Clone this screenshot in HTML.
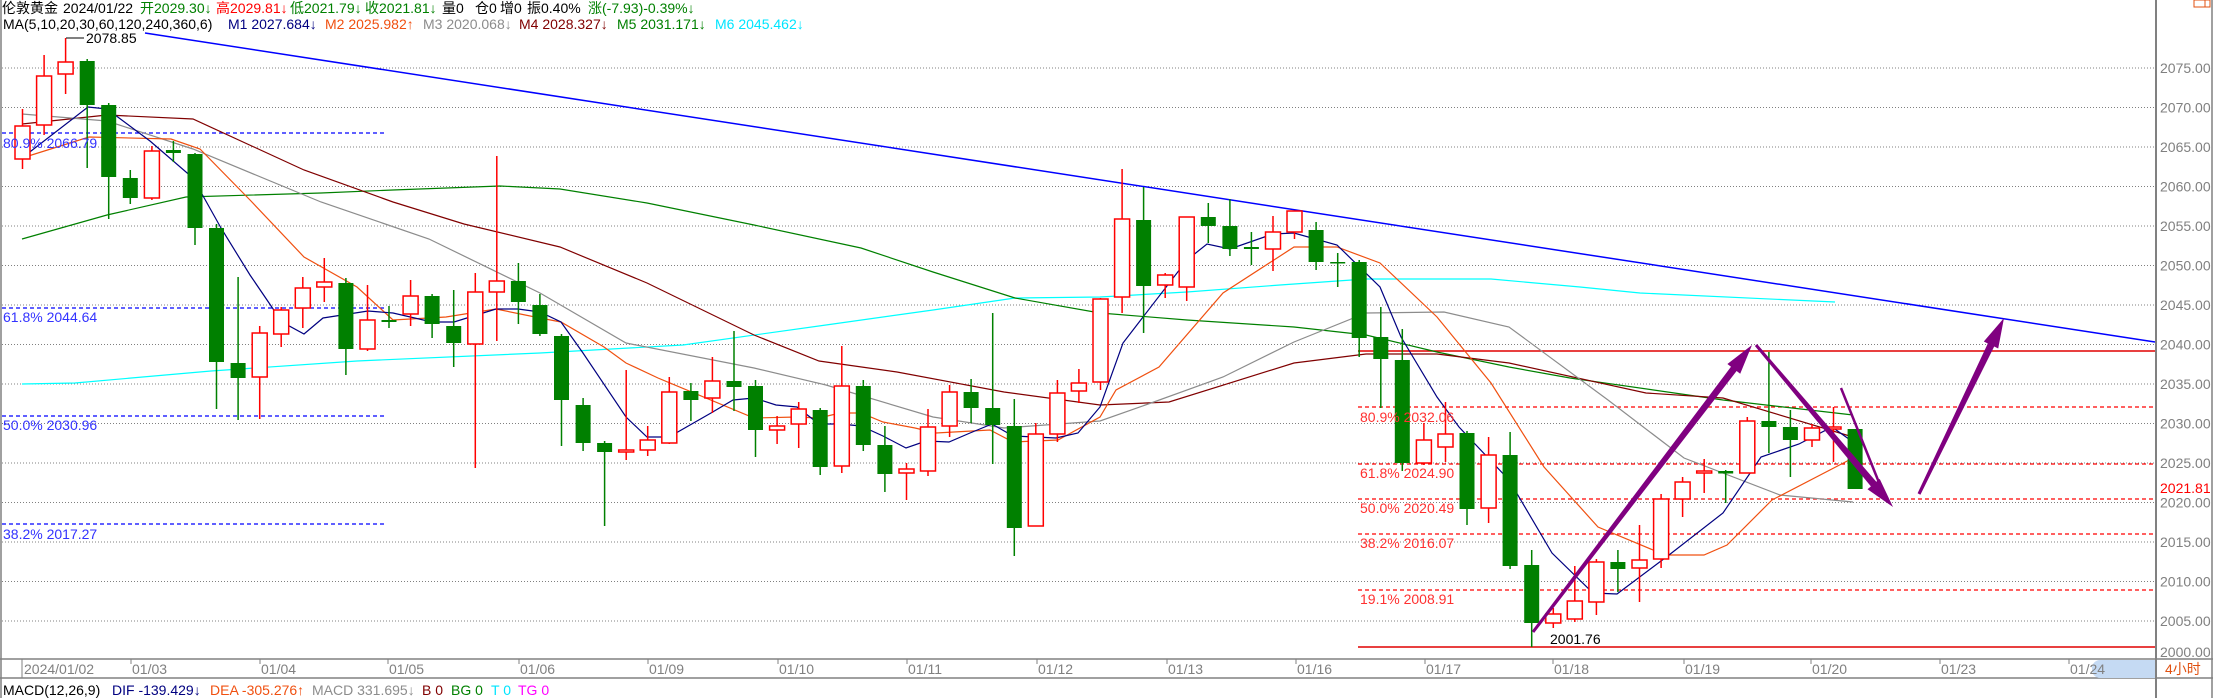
<!DOCTYPE html>
<html><head><meta charset="utf-8"><style>
html,body{margin:0;padding:0;background:#fff;width:2213px;height:698px;overflow:hidden}
svg{display:block;font-family:"Liberation Sans","Noto Sans CJK SC",sans-serif;font-size:14px}
.g line{stroke:#008000;stroke-width:1.5}
.g rect{fill:#008000}
.r line{stroke:#ff0000;stroke-width:1.5}
.r rect{fill:#fff;stroke:#ff0000;stroke-width:1.5}
.grid line{stroke:#808080;stroke-width:1;stroke-dasharray:1 2}
.ax text{fill:#808080}
.ma{fill:none;stroke-width:1.2}
</style></head><body>
<svg width="2213" height="698" viewBox="0 0 2213 698" xmlns="http://www.w3.org/2000/svg">
<line x1="1" y1="0" x2="1" y2="698" stroke="#808080" stroke-width="1.5"/>
<line x1="2156" y1="0" x2="2156" y2="698" stroke="#808080" stroke-width="2"/>
<line x1="2212" y1="0" x2="2212" y2="698" stroke="#808080" stroke-width="1.5"/>
<rect x="2194" y="0" width="16" height="7" fill="none" stroke="#e05010" stroke-width="1"/>
<line x1="2205" y1="0" x2="2205" y2="7" stroke="#e05010"/>
<g class="grid">
<line x1="2" y1="68" x2="2155" y2="68"/><line x1="2" y1="107.5" x2="2155" y2="107.5"/><line x1="2" y1="147" x2="2155" y2="147"/><line x1="2" y1="186.5" x2="2155" y2="186.5"/><line x1="2" y1="226" x2="2155" y2="226"/><line x1="2" y1="265.5" x2="2155" y2="265.5"/><line x1="2" y1="305" x2="2155" y2="305"/><line x1="2" y1="344.5" x2="2155" y2="344.5"/><line x1="2" y1="384" x2="2155" y2="384"/><line x1="2" y1="423.5" x2="2155" y2="423.5"/><line x1="2" y1="463" x2="2155" y2="463"/><line x1="2" y1="502.5" x2="2155" y2="502.5"/><line x1="2" y1="542" x2="2155" y2="542"/><line x1="2" y1="581.5" x2="2155" y2="581.5"/><line x1="2" y1="621" x2="2155" y2="621"/>
</g>
<g class="ax">
<text x="2160" y="73">2075.00</text><text x="2160" y="112.5">2070.00</text><text x="2160" y="152">2065.00</text><text x="2160" y="191.5">2060.00</text><text x="2160" y="231">2055.00</text><text x="2160" y="270.5">2050.00</text><text x="2160" y="310">2045.00</text><text x="2160" y="349.5">2040.00</text><text x="2160" y="389">2035.00</text><text x="2160" y="428.5">2030.00</text><text x="2160" y="468">2025.00</text><text x="2160" y="507.5">2020.00</text><text x="2160" y="547">2015.00</text><text x="2160" y="586.5">2010.00</text><text x="2160" y="626">2005.00</text><text x="2160" y="657">2000.00</text>
</g>
<text x="2160" y="493" fill="#ff0000">2021.81</text>
<g stroke="#0000ff" stroke-width="1.2" stroke-dasharray="4 3">
<line x1="2" y1="133" x2="386" y2="133"/><line x1="2" y1="308" x2="386" y2="308"/><line x1="2" y1="416" x2="386" y2="416"/><line x1="2" y1="524" x2="386" y2="524"/>
</g>
<g stroke="#ff0000" stroke-width="1.2" stroke-dasharray="4 3">
<line x1="1358" y1="407" x2="2155" y2="407"/><line x1="1358" y1="464" x2="2155" y2="464"/><line x1="1358" y1="499" x2="2155" y2="499"/><line x1="1358" y1="534" x2="2155" y2="534"/><line x1="1358" y1="590" x2="2155" y2="590"/>
</g>
<line x1="1358" y1="351" x2="2155" y2="351" stroke="#e00000" stroke-width="1.5"/>
<line x1="1358" y1="647" x2="2155" y2="647" stroke="#e00000" stroke-width="1.5"/>
<line x1="145" y1="33" x2="2155" y2="342" stroke="#0000ff" stroke-width="1.5"/>
<polyline class="ma" stroke="#00ffff" points="22,384 75,383 211,371 357,361 540,353 683,345 826,325 933,310 1015,298 1100,297 1187,292 1280,285 1366,279 1491,279 1580,287 1640,293 1835,302"/>
<polyline class="ma" stroke="#008000" points="22,239 107,215 186,197 321,193 393,190 500,186 560,189 647,203 754,225 861,248 933,272 1015,298 1100,313 1187,320 1294,327 1366,335 1437,352 1509,367 1570,378 1723,400 1853,415"/>
<polyline class="ma" stroke="#800000" stroke-width="1.5" points="22,124 107,115 193,119 304,170 393,202 464,224 560,247 647,283 754,335 819,361 897,372 1004,392 1100,405 1169,402 1294,363 1366,354 1437,354 1509,363 1646,393 1723,398 1853,437"/>
<polyline class="ma" stroke="#8c8c8c" points="22,114 107,121 193,149 321,202 429,239 540,293 626,343 754,368 826,385 933,417 1004,428 1100,421 1151,403 1223,377 1294,342 1366,313 1444,312 1509,327 1608,400 1684,458 1780,495 1853,502"/>
<polyline class="ma" stroke="#f05010" points="22,158 89,137 171,139 200,149 250,200 304,257 357,287 393,320 446,317 496,309 540,318 561,322 604,347 626,363 658,378 754,418 797,417 819,418 840,413 861,413 883,422 915,428 936,433 990,430 1013,442 1058,440 1100,417 1116,390 1159,367 1223,293 1294,247 1337,247 1380,263 1437,317 1491,383 1544,467 1598,527 1665,555 1704,555 1727,545 1772,500 1853,458"/>
<polyline class="ma" stroke="#000080" points="22,158 88,107 107,109 150,141 193,178 221,228 250,275 282,322 304,334 323,318 368,311 393,313 432,322 454,322 496,309 518,309 540,312 561,322 583,353 626,417 647,437 669,437 711,413 733,400 754,398 776,405 797,407 819,424 840,424 861,426 883,436 906,448 926,441 949,442 970,433 992,424 1013,436 1056,438 1078,433 1100,407 1123,343 1187,260 1207,244 1230,249 1273,234 1294,233 1337,245 1380,287 1401,337 1437,397 1459,427 1509,480 1552,553 1593,593 1617,594 1669,555 1723,513 1761,457 1799,444 1832,427 1853,442"/>
<g class="r"><line x1="22.5" y1="109" x2="22.5" y2="169"/><rect x="15" y="126" width="15" height="33"/></g>
<g class="r"><line x1="44.1" y1="55" x2="44.1" y2="135"/><rect x="36.6" y="76" width="15" height="49"/></g>
<g class="r"><line x1="65.6" y1="38" x2="65.6" y2="94"/><rect x="58.1" y="62" width="15" height="12"/></g>
<g class="g"><line x1="87.2" y1="59" x2="87.2" y2="168"/><rect x="79.7" y="61" width="15" height="44"/></g>
<g class="g"><line x1="108.7" y1="103" x2="108.7" y2="219"/><rect x="101.2" y="105" width="15" height="72"/></g>
<g class="g"><line x1="130.3" y1="170" x2="130.3" y2="204"/><rect x="122.8" y="178" width="15" height="20"/></g>
<g class="r"><line x1="151.9" y1="146" x2="151.9" y2="200"/><rect x="144.4" y="151" width="15" height="47"/></g>
<g class="g"><line x1="173.4" y1="141" x2="173.4" y2="162"/><rect x="165.9" y="150" width="15" height="3"/></g>
<g class="g"><line x1="195" y1="153" x2="195" y2="245"/><rect x="187.5" y="154" width="15" height="74"/></g>
<g class="g"><line x1="216.5" y1="224" x2="216.5" y2="409"/><rect x="209" y="228" width="15" height="134"/></g>
<g class="g"><line x1="238.1" y1="277" x2="238.1" y2="420"/><rect x="230.6" y="363" width="15" height="15"/></g>
<g class="r"><line x1="259.7" y1="326" x2="259.7" y2="419"/><rect x="252.2" y="333" width="15" height="44"/></g>
<g class="r"><line x1="281.2" y1="307" x2="281.2" y2="347"/><rect x="273.7" y="310" width="15" height="24"/></g>
<g class="r"><line x1="302.8" y1="277" x2="302.8" y2="328"/><rect x="295.3" y="288" width="15" height="20"/></g>
<g class="r"><line x1="324.3" y1="258" x2="324.3" y2="302"/><rect x="316.8" y="282" width="15" height="5"/></g>
<g class="g"><line x1="345.9" y1="278" x2="345.9" y2="375"/><rect x="338.4" y="283" width="15" height="66"/></g>
<g class="r"><line x1="367.5" y1="285" x2="367.5" y2="351"/><rect x="360" y="320" width="15" height="29"/></g>
<g class="g"><line x1="389" y1="306" x2="389" y2="328"/><rect x="381.5" y="320" width="15" height="2"/></g>
<g class="r"><line x1="410.6" y1="280" x2="410.6" y2="326"/><rect x="403.1" y="296" width="15" height="18"/></g>
<g class="g"><line x1="432.1" y1="294" x2="432.1" y2="338"/><rect x="424.6" y="296" width="15" height="28"/></g>
<g class="g"><line x1="453.7" y1="290" x2="453.7" y2="367"/><rect x="446.2" y="326" width="15" height="17"/></g>
<g class="r"><line x1="475.3" y1="273" x2="475.3" y2="468"/><rect x="467.8" y="292" width="15" height="52"/></g>
<g class="r"><line x1="496.8" y1="156" x2="496.8" y2="341"/><rect x="489.3" y="281" width="15" height="11"/></g>
<g class="g"><line x1="518.4" y1="263" x2="518.4" y2="324"/><rect x="510.9" y="281" width="15" height="21"/></g>
<g class="g"><line x1="539.9" y1="294" x2="539.9" y2="336"/><rect x="532.4" y="305" width="15" height="29"/></g>
<g class="g"><line x1="561.5" y1="334" x2="561.5" y2="446"/><rect x="554" y="336" width="15" height="64"/></g>
<g class="g"><line x1="583.1" y1="398" x2="583.1" y2="451"/><rect x="575.6" y="405" width="15" height="38"/></g>
<g class="g"><line x1="604.6" y1="441" x2="604.6" y2="526"/><rect x="597.1" y="443" width="15" height="9"/></g>
<g class="r"><line x1="626.2" y1="370" x2="626.2" y2="460"/><rect x="618.7" y="450" width="15" height="2" fill="#f00"/></g>
<g class="r"><line x1="647.7" y1="426" x2="647.7" y2="456"/><rect x="640.2" y="440" width="15" height="10"/></g>
<g class="r"><line x1="669.3" y1="377" x2="669.3" y2="444"/><rect x="661.8" y="392" width="15" height="51"/></g>
<g class="g"><line x1="690.9" y1="383" x2="690.9" y2="421"/><rect x="683.4" y="391" width="15" height="9"/></g>
<g class="r"><line x1="712.4" y1="357" x2="712.4" y2="413"/><rect x="704.9" y="381" width="15" height="17"/></g>
<g class="g"><line x1="734" y1="331" x2="734" y2="411"/><rect x="726.5" y="381" width="15" height="6"/></g>
<g class="g"><line x1="755.5" y1="380" x2="755.5" y2="457"/><rect x="748" y="386" width="15" height="44"/></g>
<g class="r"><line x1="777.1" y1="416" x2="777.1" y2="444"/><rect x="769.6" y="426" width="15" height="4"/></g>
<g class="r"><line x1="798.7" y1="402" x2="798.7" y2="448"/><rect x="791.2" y="409" width="15" height="15"/></g>
<g class="g"><line x1="820.2" y1="408" x2="820.2" y2="475"/><rect x="812.7" y="410" width="15" height="57"/></g>
<g class="r"><line x1="841.8" y1="346" x2="841.8" y2="473"/><rect x="834.3" y="386" width="15" height="80"/></g>
<g class="g"><line x1="863.3" y1="380" x2="863.3" y2="451"/><rect x="855.8" y="386" width="15" height="59"/></g>
<g class="g"><line x1="884.9" y1="426" x2="884.9" y2="492"/><rect x="877.4" y="445" width="15" height="29"/></g>
<g class="r"><line x1="906.5" y1="463" x2="906.5" y2="500"/><rect x="899" y="469" width="15" height="4"/></g>
<g class="r"><line x1="928" y1="409" x2="928" y2="476"/><rect x="920.5" y="427" width="15" height="44"/></g>
<g class="r"><line x1="949.6" y1="385" x2="949.6" y2="437"/><rect x="942.1" y="392" width="15" height="34"/></g>
<g class="g"><line x1="971.1" y1="379" x2="971.1" y2="423"/><rect x="963.6" y="392" width="15" height="16"/></g>
<g class="g"><line x1="992.7" y1="313" x2="992.7" y2="464"/><rect x="985.2" y="408" width="15" height="17"/></g>
<g class="g"><line x1="1014.3" y1="399" x2="1014.3" y2="556"/><rect x="1006.8" y="426" width="15" height="102"/></g>
<g class="r"><line x1="1035.8" y1="423" x2="1035.8" y2="526"/><rect x="1028.3" y="434" width="15" height="92"/></g>
<g class="r"><line x1="1057.4" y1="380" x2="1057.4" y2="442"/><rect x="1049.9" y="393" width="15" height="41"/></g>
<g class="r"><line x1="1078.9" y1="369" x2="1078.9" y2="403"/><rect x="1071.4" y="383" width="15" height="8"/></g>
<g class="r"><line x1="1100.5" y1="298" x2="1100.5" y2="390"/><rect x="1093" y="299" width="15" height="83"/></g>
<g class="r"><line x1="1122.1" y1="169" x2="1122.1" y2="313"/><rect x="1114.6" y="219" width="15" height="78"/></g>
<g class="g"><line x1="1143.6" y1="187" x2="1143.6" y2="333"/><rect x="1136.1" y="220" width="15" height="66"/></g>
<g class="r"><line x1="1165.2" y1="273" x2="1165.2" y2="298"/><rect x="1157.7" y="275" width="15" height="10"/></g>
<g class="r"><line x1="1186.7" y1="217" x2="1186.7" y2="301"/><rect x="1179.2" y="217" width="15" height="70"/></g>
<g class="g"><line x1="1208.3" y1="203" x2="1208.3" y2="243"/><rect x="1200.8" y="217" width="15" height="9"/></g>
<g class="g"><line x1="1229.9" y1="199" x2="1229.9" y2="256"/><rect x="1222.4" y="226" width="15" height="23"/></g>
<g class="g"><line x1="1251.4" y1="232" x2="1251.4" y2="265"/><rect x="1243.9" y="247" width="15" height="2"/></g>
<g class="r"><line x1="1273" y1="216" x2="1273" y2="271"/><rect x="1265.5" y="232" width="15" height="17"/></g>
<g class="r"><line x1="1294.5" y1="211" x2="1294.5" y2="239"/><rect x="1287" y="211" width="15" height="21"/></g>
<g class="g"><line x1="1316.1" y1="222" x2="1316.1" y2="270"/><rect x="1308.6" y="230" width="15" height="32"/></g>
<g class="g"><line x1="1337.7" y1="253" x2="1337.7" y2="287"/><rect x="1330.2" y="262" width="15" height="1.5"/></g>
<g class="g"><line x1="1359.2" y1="260" x2="1359.2" y2="357"/><rect x="1351.7" y="262" width="15" height="76"/></g>
<g class="g"><line x1="1380.8" y1="307" x2="1380.8" y2="408"/><rect x="1373.3" y="337" width="15" height="22"/></g>
<g class="g"><line x1="1402.3" y1="329" x2="1402.3" y2="471"/><rect x="1394.8" y="360" width="15" height="103"/></g>
<g class="r"><line x1="1423.9" y1="423" x2="1423.9" y2="465"/><rect x="1416.4" y="440" width="15" height="23"/></g>
<g class="r"><line x1="1445.5" y1="402" x2="1445.5" y2="462"/><rect x="1438" y="434" width="15" height="13"/></g>
<g class="g"><line x1="1467" y1="431" x2="1467" y2="525"/><rect x="1459.5" y="433" width="15" height="76"/></g>
<g class="r"><line x1="1488.6" y1="437" x2="1488.6" y2="523"/><rect x="1481.1" y="455" width="15" height="53"/></g>
<g class="g"><line x1="1510.1" y1="432" x2="1510.1" y2="569"/><rect x="1502.6" y="455" width="15" height="111"/></g>
<g class="g"><line x1="1531.7" y1="550" x2="1531.7" y2="647"/><rect x="1524.2" y="565" width="15" height="58"/></g>
<g class="r"><line x1="1553.3" y1="608" x2="1553.3" y2="628"/><rect x="1545.8" y="614" width="15" height="9"/></g>
<g class="r"><line x1="1574.8" y1="566" x2="1574.8" y2="622"/><rect x="1567.3" y="601" width="15" height="18"/></g>
<g class="r"><line x1="1596.4" y1="559" x2="1596.4" y2="615"/><rect x="1588.9" y="562" width="15" height="40"/></g>
<g class="g"><line x1="1617.9" y1="550" x2="1617.9" y2="592"/><rect x="1610.4" y="562" width="15" height="7"/></g>
<g class="r"><line x1="1639.5" y1="525" x2="1639.5" y2="602"/><rect x="1632" y="560" width="15" height="8"/></g>
<g class="r"><line x1="1661.1" y1="494" x2="1661.1" y2="568"/><rect x="1653.6" y="499" width="15" height="60"/></g>
<g class="r"><line x1="1682.6" y1="477" x2="1682.6" y2="517"/><rect x="1675.1" y="482" width="15" height="17"/></g>
<g class="r"><line x1="1704.2" y1="459" x2="1704.2" y2="493"/><rect x="1696.7" y="471" width="15" height="2" fill="#f00"/></g>
<g class="g"><line x1="1725.7" y1="470" x2="1725.7" y2="503"/><rect x="1718.2" y="471" width="15" height="2.5"/></g>
<g class="r"><line x1="1747.3" y1="417" x2="1747.3" y2="473"/><rect x="1739.8" y="421" width="15" height="52"/></g>
<g class="g"><line x1="1768.9" y1="352" x2="1768.9" y2="453"/><rect x="1761.4" y="421" width="15" height="6"/></g>
<g class="g"><line x1="1790.4" y1="410" x2="1790.4" y2="477"/><rect x="1782.9" y="427" width="15" height="13"/></g>
<g class="r"><line x1="1812" y1="424" x2="1812" y2="447"/><rect x="1804.5" y="428" width="15" height="12"/></g>
<g class="r"><line x1="1833.5" y1="407" x2="1833.5" y2="462"/><rect x="1826" y="427" width="15" height="2" fill="#f00"/></g>
<g class="g"><line x1="1855.1" y1="429" x2="1855.1" y2="489"/><rect x="1847.6" y="429" width="15" height="60"/></g>
<g fill="#3333ff"><text x="3" y="148">80.9% 2066.79</text><text x="3" y="322">61.8% 2044.64</text><text x="3" y="430">50.0% 2030.96</text><text x="3" y="539">38.2% 2017.27</text></g>
<g fill="#ff3030"><text x="1360" y="422">80.9% 2032.06</text><text x="1360" y="478">61.8% 2024.90</text><text x="1360" y="513">50.0% 2020.49</text><text x="1360" y="548">38.2% 2016.07</text><text x="1360" y="604">19.1% 2008.91</text></g>
<line x1="66" y1="38" x2="84" y2="38" stroke="#000" stroke-width="1"/>
<text x="86" y="43" fill="#000">2078.85</text>
<text x="1550" y="644" fill="#000">2001.76</text>
<g fill="#800080">
<polygon points="1534.2,632.9 1736.6,371 1740.2,373.8 1752,345 1727.4,364 1731,366.8 1531.8,631.1"/>
<polygon points="1757.1,344 1876.3,481.8 1879.7,478.9 1893,507 1867.5,489.3 1870.9,486.4 1754.9,346"/>
<polygon points="1920.4,494.7 1994.2,346.5 1998.2,348.5 2004,318 1983.8,341.5 1987.8,343.5 1917.6,493.3"/>
</g>
<line x1="1841" y1="388" x2="1884" y2="495" stroke="#800080" stroke-width="2.5"/>
<g>
<text x="2" y="13" fill="#000">伦敦黄金</text>
<text x="63" y="13" fill="#000">2024/01/22</text>
<text x="140" y="13" fill="#008000">开2029.30↓</text>
<text x="216" y="13" fill="#ff0000">高2029.81↓</text>
<text x="290" y="13" fill="#008000">低2021.79↓</text>
<text x="365" y="13" fill="#008000">收2021.81↓</text>
<text x="442" y="13" fill="#000">量0</text>
<text x="475" y="13" fill="#000">仓0</text>
<text x="500" y="13" fill="#000">增0</text>
<text x="527" y="13" fill="#000">振0.40%</text>
<text x="588" y="13" fill="#008000">涨(-7.93)-0.39%↓</text>
<text x="3" y="29" fill="#000">MA(5,10,20,30,60,120,240,360,6)</text>
<text x="228" y="29" fill="#000080">M1 2027.684↓</text>
<text x="325" y="29" fill="#f05010">M2 2025.982↑</text>
<text x="423" y="29" fill="#8c8c8c">M3 2020.068↓</text>
<text x="519" y="29" fill="#800000">M4 2028.327↓</text>
<text x="617" y="29" fill="#008000">M5 2031.171↓</text>
<text x="715" y="29" fill="#00e5ff">M6 2045.462↓</text>
</g>
<line x1="0" y1="659" x2="2156" y2="659" stroke="#808080" stroke-width="1.5"/>
<line x1="0" y1="678" x2="2213" y2="678" stroke="#808080" stroke-width="1.5"/>
<line x1="2156" y1="659" x2="2213" y2="659" stroke="#808080" stroke-width="1.5"/>
<rect x="2092" y="660" width="63" height="18" rx="8" fill="#c5daf3"/>
<rect x="2110" y="660" width="45" height="18" fill="#c5daf3"/>
<line x1="22" y1="659" x2="22" y2="678" stroke="#808080"/>
<g stroke="#808080">
<line x1="131" y1="659" x2="131" y2="664"/><line x1="260" y1="659" x2="260" y2="664"/><line x1="388" y1="659" x2="388" y2="664"/><line x1="519" y1="659" x2="519" y2="664"/><line x1="648" y1="659" x2="648" y2="664"/><line x1="778" y1="659" x2="778" y2="664"/><line x1="907" y1="659" x2="907" y2="664"/><line x1="1037" y1="659" x2="1037" y2="664"/><line x1="1167" y1="659" x2="1167" y2="664"/><line x1="1296" y1="659" x2="1296" y2="664"/><line x1="1425" y1="659" x2="1425" y2="664"/><line x1="1553" y1="659" x2="1553" y2="664"/><line x1="1684" y1="659" x2="1684" y2="664"/><line x1="1811" y1="659" x2="1811" y2="664"/><line x1="1940" y1="659" x2="1940" y2="664"/><line x1="2069" y1="659" x2="2069" y2="664"/>
</g>
<g fill="#808080">
<text x="24" y="674">2024/01/02</text>
<text x="132" y="674">01/03</text><text x="261" y="674">01/04</text><text x="389" y="674">01/05</text><text x="520" y="674">01/06</text><text x="649" y="674">01/09</text><text x="779" y="674">01/10</text><text x="908" y="674">01/11</text><text x="1038" y="674">01/12</text><text x="1168" y="674">01/13</text><text x="1297" y="674">01/16</text><text x="1426" y="674">01/17</text><text x="1554" y="674">01/18</text><text x="1685" y="674">01/19</text><text x="1812" y="674">01/20</text><text x="1941" y="674">01/23</text><text x="2070" y="674">01/24</text>
</g>
<text x="2165" y="674" fill="#e05010">4小时</text>
<text x="3" y="695" fill="#000">MACD(12,26,9)</text>
<text x="112" y="695" fill="#000080">DIF -139.429↓</text>
<text x="210" y="695" fill="#f05010">DEA -305.276↑</text>
<text x="312" y="695" fill="#8c8c8c">MACD 331.695↓</text>
<text x="422" y="695" fill="#800000">B 0</text>
<text x="451" y="695" fill="#008000">BG 0</text>
<text x="491" y="695" fill="#00e5ff">T 0</text>
<text x="518" y="695" fill="#ff00ff">TG 0</text>
</svg>
</body></html>
